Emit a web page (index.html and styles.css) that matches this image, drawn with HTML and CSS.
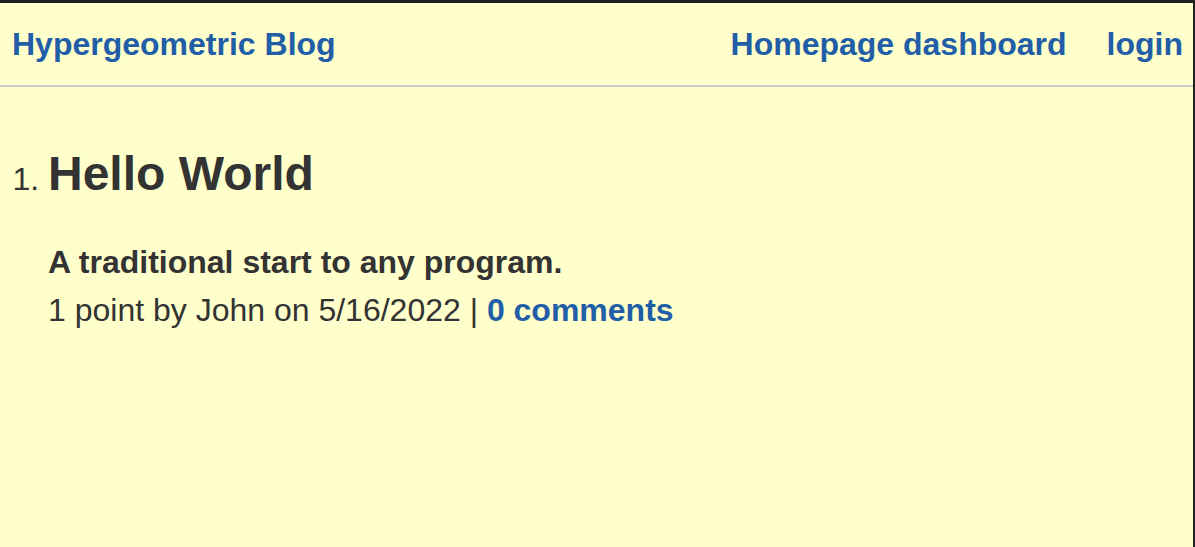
FILE: index.html
```html
<!DOCTYPE html>
<html lang="en">
<head>
<meta charset="utf-8">
<title>Hypergeometric Blog</title>
<link rel="stylesheet" href="styles.css">
</head>
<body>
<div class="page">
  <header class="topbar">
    <a class="brand" href="#">Hypergeometric Blog</a>
    <nav class="nav">
      <a href="#">Homepage dashboard</a>
      <a href="#">login</a>
    </nav>
  </header>
  <main class="content">
    <ol class="posts">
      <li class="post">
        <h2 class="post-title">Hello World</h2>
        <p class="post-sub">A traditional start to any program.</p>
        <p class="post-meta">1 point by John on 5/16/2022 | <a href="#">0 comments</a></p>
      </li>
    </ol>
  </main>
</div>
</body>
</html>
```
FILE: styles.css
```css
html, body {
  margin: 0;
  padding: 0;
  height: 100%;
}
body {
  background: #ffffcc;
  color: #333333;
  font-family: "Liberation Sans", Arial, sans-serif;
}
a {
  color: #225ea8;
  text-decoration: none;
  font-weight: bold;
}
.page {
  box-sizing: border-box;
  height: 100%;
  border-top: 3px solid #1e1e1e;
  border-right: 2px solid #1e1e1e;
}
.topbar {
  display: flex;
  justify-content: space-between;
  align-items: center;
  padding: 23px 10px 23px 12px;
  border-bottom: 2px solid #cccccc;
  font-size: 32px;
  line-height: 36px;
}
.nav {
  display: flex;
  gap: 40px;
}
.content {
  padding-top: 59px;
}
.posts {
  margin: 0;
  padding: 0 0 0 48px;
  font-size: 32px;
}
.post-title {
  margin: 0;
  font-size: 48px;
  line-height: 56px;
  font-weight: bold;
}
.post-sub {
  margin: 36px 0 0;
  font-weight: bold;
  line-height: 48px;
}
.post-meta {
  margin: 0;
  line-height: 48px;
}
```
